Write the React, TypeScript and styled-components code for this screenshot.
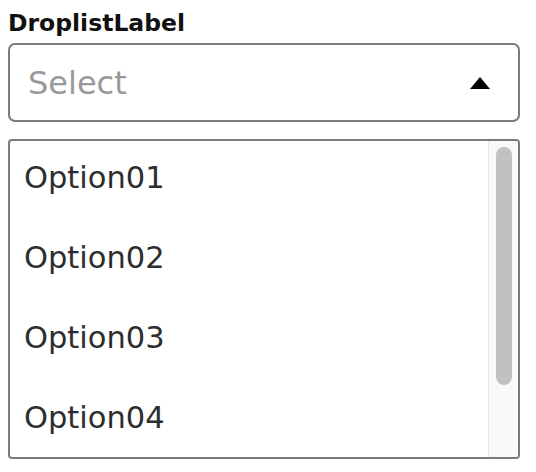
import styled, { createGlobalStyle } from "styled-components";

const GlobalStyle = createGlobalStyle`
  body {
    margin: 0;
    background: #ffffff;
    font-family: "DejaVu Sans", Inter, sans-serif;
  }
`

const options = ["Option01", "Option02", "Option03", "Option04"];

export default function App() {
  return (
    <>
      <GlobalStyle />
      <Wrapper>
        <Label>DroplistLabel</Label>
        <SelectBox>
          <Placeholder>Select</Placeholder>
          <Caret viewBox="0 0 20 12" aria-hidden="true">
            <path d="M10 0 L20 12 L0 12 Z" fill="#000" />
          </Caret>
        </SelectBox>
        <ListBox>
          <OptionList>
            {options.map((o) => (
              <OptionItem key={o}>{o}</OptionItem>
            ))}
          </OptionList>
          <ScrollTrack>
            <ScrollThumb />
          </ScrollTrack>
        </ListBox>
      </Wrapper>
    </>
  )
}

const Wrapper = styled.div`
  display: flex;
  flex-direction: column;
  width: 512px;
  padding: 8px;
`

const Label = styled.label`
  font-size: 23.5px;
  line-height: 30px;
  font-weight: 700;
  color: #111;
  margin-bottom: 5px;
`

const SelectBox = styled.div`
  box-sizing: border-box;
  height: 79px;
  display: flex;
  align-items: center;
  justify-content: space-between;
  padding: 0 28px 0 18px;
  border: 2px solid #7a7a7a;
  border-radius: 7px;
`

const Placeholder = styled.span`
  font-size: 32px;
  color: #999;
`

const Caret = styled.svg`
  width: 20px;
  height: 12px;
`

const ListBox = styled.div`
  box-sizing: border-box;
  display: flex;
  margin-top: 17px;
  height: 320px;
  overflow: hidden;
  border: 2px solid #7a7a7a;
  border-radius: 4px;
`

const OptionList = styled.ul`
  flex: 1;
  list-style: none;
  margin: 0;
  padding: 0;
  overflow: hidden;
`

const OptionItem = styled.li`
  height: 80px;
  display: flex;
  align-items: center;
  padding: 0 14px;
  margin-top: -4px;
  margin-bottom: 4px;
  font-size: 30.5px;
  color: #2e2e2e;
`

const ScrollTrack = styled.div`
  box-sizing: border-box;
  width: 30px;
  padding: 6px 6px 0 7px;
  background: #f9f9f9;
  border-left: 1px solid #e6e6e6;
`

const ScrollThumb = styled.div`
  height: 238px;
  border-radius: 8px;
  background: #c1c1c1;
`
